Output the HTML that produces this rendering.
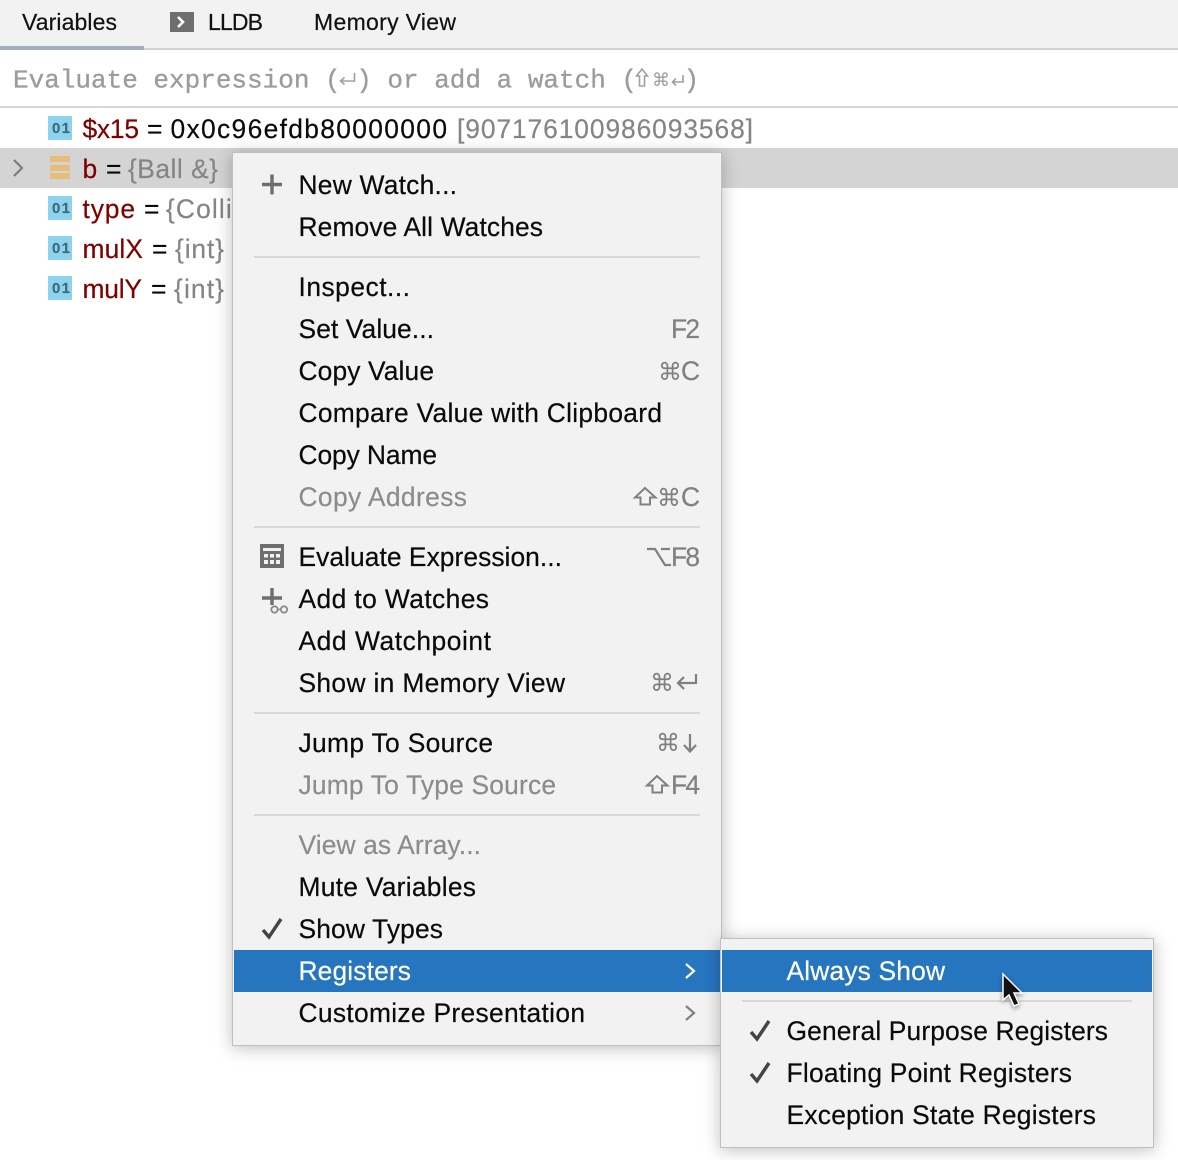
<!DOCTYPE html>
<html><head><meta charset="utf-8">
<style>
html,body{margin:0;padding:0;background:#fff;width:1178px;height:1160px;overflow:hidden}
#r{position:relative;width:1178px;height:1160px;overflow:hidden;font-family:"Liberation Sans",sans-serif}
svg{position:absolute;left:0;top:0}
.m{position:absolute;background:#f2f2f2;box-sizing:border-box;border:1px solid #c0c0c0;box-shadow:0 2px 16px rgba(0,0,0,.26)}
text{font-family:"Liberation Sans","DejaVu Sans",sans-serif;font-size:26.4px;fill:#0a0a0a;stroke:#0a0a0a;stroke-width:.2px}
.g{fill:#8c8c8c;stroke:#8c8c8c}
.k{fill:#808080;stroke:#808080}
.c{font-family:"DejaVu Sans",sans-serif;font-size:24px;fill:#808080;stroke:none}
.h{font-size:23px;fill:#111;stroke:#111}
.e{font-family:"Liberation Mono","DejaVu Sans Mono",monospace;font-size:26px;fill:#9c9c9c;stroke:#9c9c9c;stroke-width:.35px}
.r{fill:#7f0000;stroke:#7f0000}
.v{fill:#858585;stroke:#858585}
.i{font-size:15px;font-weight:bold;fill:#3d6a78;stroke:#3d6a78}
.w{fill:#fff;stroke:#fff}
</style></head><body>
<div id="r">
<svg width="1178" height="1160">
<rect x="0" y="0" width="1178" height="48" fill="#f2f2f2"/>
<rect x="0" y="48" width="1178" height="2" fill="#d2d2d2"/>
<rect x="0" y="46" width="144" height="4" fill="#a0aec0"/>
<text class="h" x="22" y="30" textLength="95">Variables</text>
<rect x="170" y="12" width="24" height="20" fill="#6e6e6e"/>
<path d="M178 17l5 5-5 5" fill="none" stroke="#fff" stroke-width="2.6"/>
<text class="h" x="208" y="30" textLength="55">LLDB</text>
<text class="h" x="314" y="30" textLength="142">Memory View</text>

<rect x="0" y="106" width="1178" height="2" fill="#d6d6d6"/>
<text class="e" x="13" y="87.500">Evaluate expression (</text>
<text class="e" x="356.200" y="87.500">) or add a watch (</text>
<text class="e" x="683.600" y="87.500">)</text>
<g fill="none" stroke="#a0a0a0" stroke-width="1.600">
<path d="M355 75v8h-14M345 79.500l-4 3.500 4 3.500" transform="translate(-0.500,-2)"/>
<path d="M642 69l-5.500 7h3v10h5v-10h3z"/>
<path d="M683 75v7h-10.500M676 78.500l-3.500 3.500 3.500 3.500"/>
</g>
<text x="652" y="86" style="font-family:'DejaVu Sans',sans-serif;font-size:18px;fill:#9c9c9c;stroke:none">⌘</text>

<rect x="0" y="148" width="1178" height="40" fill="#d4d4d4"/>
<path d="M14 160l8 8-8 8" fill="none" stroke="#7c7c7c" stroke-width="2.200"/>
<rect x="50" y="156" width="20" height="6" fill="#e7bd7a"/><rect x="50" y="165" width="20" height="6" fill="#e7bd7a"/><rect x="50" y="173" width="20" height="6" fill="#e7bd7a"/>

<g fill="#8dd3ee"><rect x="48" y="116" width="24" height="24"/><rect x="48" y="196" width="24" height="24"/><rect x="48" y="236" width="24" height="24"/><rect x="48" y="276" width="24" height="24"/></g>
<text class="i" x="52" y="133" textLength="18">01</text>
<text class="i" x="52" y="213" textLength="18">01</text>
<text class="i" x="52" y="253" textLength="18">01</text>
<text class="i" x="52" y="293" textLength="18">01</text>

<text class="r" x="82.500" y="138" textLength="56.500">$x15</text>
<text x="147" y="138" textLength="15">=</text>
<text x="170.500" y="138" textLength="276.500">0x0c96efdb80000000</text>
<text class="v" x="457" y="138" textLength="296">[907176100986093568]</text>

<text class="r" x="82.500" y="178" textLength="14.500">b</text>
<text x="106" y="178" textLength="15">=</text>
<text class="v" x="128" y="178" textLength="90">{Ball &amp;}</text>

<text class="r" x="82.500" y="218" textLength="52.500">type</text>
<text x="144" y="218" textLength="15">=</text>
<text class="v" x="166" y="218" textLength="80">{Collis</text>

<text class="r" x="82.500" y="258" textLength="60.500">mulX</text>
<text x="152" y="258" textLength="15">=</text>
<text class="v" x="175" y="258" textLength="49">{int}</text>

<text class="r" x="82.500" y="298" textLength="59.500">mulY</text>
<text x="151" y="298" textLength="15">=</text>
<text class="v" x="174" y="298" textLength="50">{int}</text>
</svg>

<div class="m" style="left:232px;top:152px;width:490px;height:894px"></div>
<svg width="1178" height="1160">
<g fill="#d8d8d8"><rect x="254" y="256" width="446" height="2"/><rect x="254" y="526" width="446" height="2"/><rect x="254" y="712" width="446" height="2"/><rect x="254" y="814" width="446" height="2"/></g>
<rect x="234" y="950" width="488" height="42" fill="#2675bf"/>

<path d="M262 184.500h20M272 174.500v20" stroke="#6e6e6e" stroke-width="3.400" fill="none"/>
<rect x="260" y="544" width="24" height="24" fill="#6e6e6e"/>
<g fill="#f2f2f2"><rect x="263" y="548" width="18" height="3"/><rect x="264" y="554" width="4" height="3.500"/><rect x="270" y="554" width="4" height="3.500"/><rect x="276" y="554" width="4" height="3.500"/><rect x="264" y="560" width="4" height="4"/><rect x="270" y="560" width="4" height="4"/><rect x="276" y="560" width="4" height="4"/></g>
<path d="M262 598h20M272 588v17" stroke="#6e6e6e" stroke-width="3.400" fill="none"/>
<circle cx="274.500" cy="609.500" r="3.200" fill="none" stroke="#8a8a8a" stroke-width="1.800"/><circle cx="284" cy="609.500" r="3.200" fill="none" stroke="#8a8a8a" stroke-width="1.800"/><path d="M277.500 609.500h3.500" stroke="#8a8a8a" stroke-width="1.500"/>
<path d="M263 930l6 7 12-18" fill="none" stroke="#444" stroke-width="3.400"/>

<text x="298.500" y="194" textLength="158.500">New Watch...</text>
<text x="298.500" y="236" textLength="244.500">Remove All Watches</text>
<text x="298.500" y="296" textLength="111.500">Inspect...</text>
<text x="298.500" y="338" textLength="135.500">Set Value...</text>
<text class="k" x="671" y="338" textLength="29">F2</text>
<text x="298.500" y="380" textLength="135.500">Copy Value</text>
<text class="c" x="658" y="380">⌘</text>
<text class="k" x="681" y="380" textLength="19">C</text>
<text x="298.500" y="422" textLength="363.500">Compare Value with Clipboard</text>
<text x="298.500" y="464" textLength="138.500">Copy Name</text>
<text class="g" x="298.500" y="506" textLength="168.500">Copy Address</text>
<path d="M645 488l-10 9.500h5.500v7h9.500v-7h5.500z" fill="none" stroke="#808080" stroke-width="2"/>
<text class="c" x="657" y="506">⌘</text>
<text class="k" x="681" y="506" textLength="19">C</text>
<text x="298.500" y="566" textLength="263.500">Evaluate Expression...</text>
<path d="M647 549h8l10 16h6M661 549h9" fill="none" stroke="#808080" stroke-width="2.200"/>
<text class="k" x="671" y="566" textLength="29">F8</text>
<text x="298.500" y="608" textLength="190.500">Add to Watches</text>
<text x="298.500" y="650" textLength="192.500">Add Watchpoint</text>
<text x="298.500" y="692" textLength="266.500">Show in Memory View</text>
<text class="c" x="650" y="691">⌘</text>
<path d="M696 674v9h-18M684 677l-6 6 6 6" fill="none" stroke="#808080" stroke-width="2.200"/>
<text x="298.500" y="752" textLength="194.500">Jump To Source</text>
<text class="c" x="656" y="751">⌘</text>
<path d="M690 734v17M684 745l6 6.500 6-6.500" fill="none" stroke="#808080" stroke-width="2.200"/>
<text class="g" x="298.500" y="794" textLength="257.500">Jump To Type Source</text>
<path d="M657 776l-10 9.500h5.500v7h9.500v-7h5.500z" fill="none" stroke="#808080" stroke-width="2"/>
<text class="k" x="671" y="794" textLength="29">F4</text>
<text class="g" x="298.500" y="854" textLength="182.500">View as Array...</text>
<text x="298.500" y="896" textLength="177.500">Mute Variables</text>
<text x="298.500" y="938" textLength="144.500">Show Types</text>
<text class="w" x="298.500" y="980" textLength="112.500">Registers</text>
<text x="298.500" y="1022" textLength="286.500">Customize Presentation</text>
<path d="M686 964l8 7-8 7" fill="none" stroke="#fff" stroke-width="2.200"/>
<path d="M686 1006l8 7-8 7" fill="none" stroke="#808080" stroke-width="2.200"/>
</svg>

<div class="m" style="left:720px;top:938px;width:434px;height:210px"></div>
<svg width="1178" height="1160">
<rect x="722" y="950" width="430" height="42" fill="#2675bf"/>
<rect x="742" y="1000" width="390" height="2" fill="#d8d8d8"/>
<text class="w" x="786.500" y="980" textLength="158.500">Always Show</text>
<text x="786.500" y="1040" textLength="321.500">General Purpose Registers</text>
<text x="786.500" y="1082" textLength="285.500">Floating Point Registers</text>
<text x="786.500" y="1124" textLength="309.500">Exception State Registers</text>
<path d="M751 1032l6 7 12-18" fill="none" stroke="#444" stroke-width="3.400"/>
<path d="M751 1074l6 7 12-18" fill="none" stroke="#444" stroke-width="3.400"/>
<path d="M1003 974v26l6-5 5 11 5-2-5-11h8z" fill="#111" stroke="#fff" stroke-width="1.500" style="filter:drop-shadow(0 2px 2px rgba(0,0,0,.4))"/>
</svg>
</div>
</body></html>
